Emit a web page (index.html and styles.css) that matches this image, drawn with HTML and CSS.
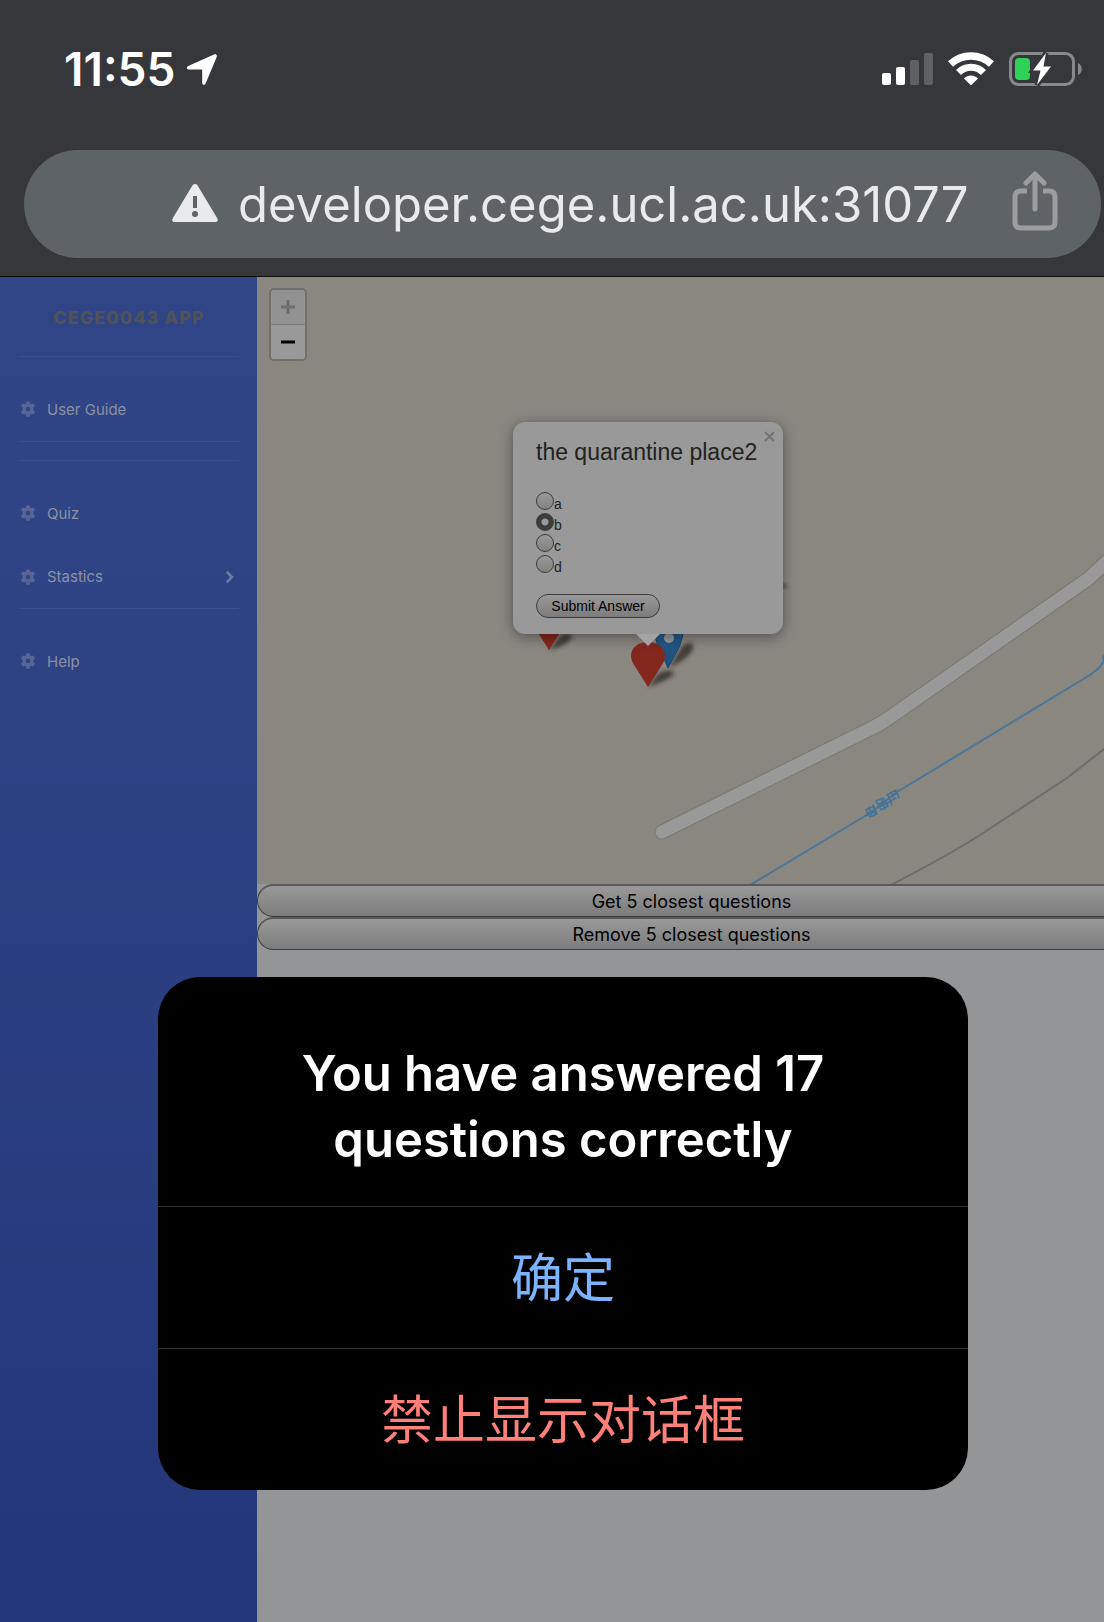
FILE: index.html
```html
<!DOCTYPE html>
<html lang="en">
<head>
<meta charset="utf-8">
<meta name="viewport" content="width=device-width, initial-scale=1">
<title>CEGE0043 APP</title>
<link rel="stylesheet" href="styles.css">
</head>
<body>
<svg class="defs" aria-hidden="true">
  <symbol id="gear" viewBox="0 0 16 16"><path fill-rule="evenodd" d="M6.500.3h3l.5 2.100 1.300.7 2.100-.7 1.700 2.900-1.700 1.400v2.600l1.700 1.400-1.700 2.900-2.100-.7-1.300.7-.5 2.100h-3L6 13.600l-1.300-.7-2.100.7L.9 10.700l1.700-1.400V6.700L.9 5.300l1.700-2.900 2.100.7L6 2.400zM8 5.700a2.300 2.300 0 1 0 0 4.600 2.300 2.300 0 0 0 0-4.600z"/></symbol>
</svg>

<header class="browser">
  <div class="status">
    <div class="status-left">
      <span class="clock">11:55</span>
      <svg class="locate" viewBox="0 0 30 31" aria-hidden="true"><path d="M27 .6c2-.8 3.400.6 2.600 2.600L18.600 29.500c-.7 1.800-3.400 1.600-3.400-.6V16.500c0-.7-.4-1-1-1H2c-2.400 0-2.700-2.600-.8-3.400z" fill="#fff"/></svg>
    </div>
    <div class="status-right">
      <svg class="signal" viewBox="0 0 51 34" aria-hidden="true"><g fill="#fff"><rect x="0" y="21" width="9" height="12" rx="2"/><rect x="14" y="15" width="9" height="18" rx="2"/></g><g fill="#5f6064"><rect x="28" y="8" width="9" height="25" rx="2"/><rect x="42" y="1" width="9" height="32" rx="2"/></g></svg>
      <svg class="wifi" viewBox="0 0 46 34" aria-hidden="true"><g fill="none" stroke="#fff"><path d="M2.500 12C14 1.200 32 1.200 43.500 12" stroke-width="7.500"/><path d="M10.500 20.500C17.500 13.500 28.500 13.500 35.500 20.500" stroke-width="7"/></g><path d="M16 26.500c4-4 10-4 14 0l-6.300 6.200c-.4.4-1 .4-1.400 0z" fill="#fff"/></svg>
      <svg class="battery" viewBox="0 0 74 34" aria-hidden="true"><rect x="1.500" y="1.500" width="63" height="31" rx="8" fill="none" stroke="#88898b" stroke-width="3"/><path d="M69 11c5 2 5 10 0 12z" fill="#88898b"/><rect x="6" y="6" width="15" height="22" rx="4" fill="#30d158"/><path d="M37 1 24 18.500h7.500L28 33l14-18.500h-7.500z" fill="#fff" stroke="#36373b" stroke-width="5" paint-order="stroke"/></svg>
    </div>
  </div>
  <div class="address">
    <svg class="warn" viewBox="0 0 46 38" aria-hidden="true"><path fill-rule="evenodd" d="M20.400 1.500c1.200-2 4-2 5.200 0l19.800 33c1 1.800 0 3.500-2 3.500H2.600c-2 0-3-1.700-2-3.500zM21 12v12h4V12zm2 15a3 3 0 1 0 0 6 3 3 0 0 0 0-6z" fill="#e8eaed"/></svg>
    <span class="url">developer.cege.ucl.ac.uk:31077</span>
    <button class="share" type="button" aria-label="Share"><svg viewBox="0 0 46 60" aria-hidden="true"><g fill="none" stroke="#9b9da1" stroke-width="5" stroke-linecap="round" stroke-linejoin="round"><path d="M23 38V3M14 12l9-9 9 9"/><path stroke-linecap="butt" d="M15 20H9q-6 0-6 6v25q0 6 6 6h28q6 0 6-6V26q0-6-6-6h-6"/></g></svg></button>
  </div>
</header>

<div class="app">
  <nav class="sidebar">
    <h1 class="brand">CEGE0043 APP</h1>
    <a class="item first" href="#guide"><svg class="gear"><use href="#gear"/></svg>User Guide</a>
    <div class="rule"></div>
    <a class="item second" href="#quiz"><svg class="gear"><use href="#gear"/></svg>Quiz</a>
    <a class="item third" href="#stats"><svg class="gear"><use href="#gear"/></svg>Stastics<svg class="chevron" viewBox="0 0 8 12" aria-hidden="true"><path d="M1.500 1.500 6 6l-4.500 4.500" fill="none" stroke="#6f7ba3" stroke-width="2.500" stroke-linecap="round"/></svg></a>
    <a class="item last" href="#help"><svg class="gear"><use href="#gear"/></svg>Help</a>
  </nav>

  <main class="content">
    <section class="map">
      <svg class="tiles" viewBox="257 277 847 607" preserveAspectRatio="xMidYMid slice" aria-hidden="true">
        <defs>
          <filter id="soft" x="-30%" y="-30%" width="160%" height="160%"><feGaussianBlur stdDeviation="2"/></filter>
          <linearGradient id="blue" x1="0" y1="0" x2="0" y2="1"><stop offset="0" stop-color="#28608f"/><stop offset="1" stop-color="#1d4c7c"/></linearGradient>
        </defs>
        <g fill="none" stroke-linejoin="round" stroke-linecap="round">
          <path id="road" d="M662 832 872 728Q880 724 886 720L1088 579 1114 555" stroke="#7c7771" stroke-width="15"/>
          <path d="M662 832 872 728Q880 724 886 720L1088 579 1114 555" stroke="#999" stroke-width="13"/>
          <path d="M745 888 870 813 897 792 1090 675 1099 668 1104 661" stroke="#4b7697" stroke-width="2"/>
          <circle cx="1107" cy="658" r="4" stroke="#4b7697" stroke-width="2"/>
          <path d="M885 888Q940 860 977 837L1067 778 1108 746" stroke="#706c69" stroke-width="2"/>
          <g stroke="#447497" stroke-width="1.500"><path d="m866 810 8-4 3 8-7 3zM867 813l9-3M869 807l3 9M873 805l2 9M866 816l10-5M876 801l7-3 5 8-7 4zM878 804l6-2M879 807l7-3M881 799l4 10M877 808l11-5M887 795l9-5 3 8M889 798l7-4M890 801l6-3M888 795l4 10M891 793l4 6M887 803l5-2"/></g>
        </g>
        <path d="M549 650 562 634H572Q574 643 549 650zM648 687 658 674Q668 668 673 672T648 687zM669 668 683 645Q694 640 693 648T669 668z" fill="#2d2926" opacity=".8" filter="url(#soft)"/>
        <ellipse cx="782" cy="586" rx="5" ry="2" fill="#45413e" filter="url(#soft)"/>
        <path d="M655 632Q655 642 661 652L668 668 675 655Q683 642 683 630L669 620z" fill="url(#blue)" stroke="#1c466b"/>
        <circle cx="669" cy="638" r="5" fill="#999"/>
        <path d="M549 650 535 628H563zM648 687 636 668Q631 661 631 656C631 647 639 642 648 642S665 647 665 656Q665 661 660 668z" fill="#84271e"/>
      </svg>
      <div class="zoom">
        <button type="button" class="zoom-in" disabled aria-label="Zoom in"><svg viewBox="0 0 14 14"><path d="M0 7h14M7 0v14" stroke="#6c6c6c" stroke-width="3"/></svg></button>
        <button type="button" aria-label="Zoom out"><svg viewBox="0 0 14 14"><path d="M0 7h14" stroke="#000" stroke-width="3"/></svg></button>
      </div>
      <form class="popup">
        <button class="close" type="button" aria-label="Close"><svg viewBox="0 0 11 11"><path d="m1 1 9 9M10 1l-9 9" stroke="#757575" stroke-width="2"/></svg></button>
        <h2>the quarantine place2</h2>
        <div class="choices">
          <label><input type="radio" name="answer"><span>a</span></label>
          <label><input type="radio" name="answer" checked><span>b</span></label>
          <label><input type="radio" name="answer"><span>c</span></label>
          <label><input type="radio" name="answer"><span>d</span></label>
        </div>
        <button class="submit" type="button">Submit Answer</button>
      </form>
    </section>
    <button class="wide" type="button">Get 5 closest questions</button>
    <button class="wide" type="button">Remove 5 closest questions</button>
  </main>

  <section class="alert" role="alertdialog" aria-labelledby="alert-title">
    <h2 id="alert-title">You have answered 17 questions correctly</h2>
    <button type="button" lang="zh-CN">确定</button>
    <button type="button" class="danger" lang="zh-CN">禁止显示对话框</button>
  </section>
</div>
</body>
</html>
```
FILE: styles.css
```css
* { box-sizing: border-box; }
body {
  margin: 0;
  min-height: 100vh;
  display: flex;
  flex-direction: column;
  font-family: Inter, "Liberation Sans", sans-serif;
  background: #949597;
}
h1, h2 { margin: 0; }
button { margin: 0; padding: 0; border: 0; font: inherit; color: inherit; }
svg { display: block; flex: none; }
.defs { position: absolute; width: 0; height: 0; }

/* Browser bar */
.browser {
  background: #36373b;
  border-bottom: 1px solid #0c0c0d;
  padding: 38px 3px 18px 24px;
}
.status {
  display: flex;
  justify-content: space-between;
  height: 62px;
  margin-bottom: 50px;
  padding: 0 18px 0 40px;
}
.status-left, .status-right { display: flex; align-items: center; }
.status-left { gap: 12px; color: #fff; }
.clock { font-size: 46px; font-weight: 600; line-height: 64px; }
.locate { width: 30px; height: 31px; }
.status-right { gap: 15px; }
.signal { width: 51px; height: 34px; }
.wifi { width: 46px; height: 34px; }
.battery { width: 74px; height: 34px; }
.address {
  display: flex;
  align-items: center;
  height: 108px;
  padding: 0 43px 0 148px;
  border-radius: 54px;
  background: #5e6367;
  color: #e8eaed;
}
.warn { width: 46px; height: 38px; margin-bottom: 2px; }
.url { flex: 1; margin-left: 20px; padding-top: 2px; font-size: 49px; line-height: 60px; white-space: nowrap; }
.share { width: 46px; height: 60px; margin-bottom: 6px; background: none; }
.share svg { width: 100%; }

/* Page */
.app { flex: 1; display: flex; position: relative; overflow: hidden; }
.sidebar {
  flex: none;
  width: 257px;
  padding: 0 18px 0 19px;
  background: linear-gradient(#2f4585 0%, #2d4384 30%, #24367a 100%);
}
.brand {
  height: 80px;
  border-bottom: 1px solid #3d508b;
  text-align: center;
  font-size: 18px;
  font-weight: 800;
  line-height: 81px;
  letter-spacing: 1px;
  color: #505259;
}
.item {
  display: flex;
  align-items: center;
  height: 64px;
  padding-left: 1px;
  font-size: 15px;
  color: #8b91a5;
  text-decoration: none;
}
.gear { width: 16px; height: 16px; margin-right: 11px; fill: #566595; }
.chevron { width: 8px; height: 12px; margin: 0 5px 0 auto; }
.first { margin-top: 20px; }
.rule { height: 20px; border: solid #3d508b; border-width: 1px 0; }
.second { margin-top: 20px; }
.third { border-bottom: 1px solid #3d508b; }
.last { margin-top: 20px; }

.content { flex: 1; min-width: 0; }
.map { position: relative; height: 607px; overflow: hidden; background: #8a8680; }
.tiles { width: 100%; height: 100%; }
.zoom {
  position: absolute;
  left: 12px;
  top: 11px;
  width: 38px;
  border: 2px solid #736e69;
  border-radius: 5px;
  overflow: hidden;
}
.zoom button { display: grid; place-items: center; width: 100%; height: 34px; background: #999; }
.zoom .zoom-in { height: 35px; background: #929292; border-bottom: 1px solid #7a7a7a; }
.zoom svg { width: 14px; height: 14px; }

.popup {
  position: absolute;
  left: 256px;
  top: 145px;
  width: 270px;
  padding: 17px 23px 16px;
  border-radius: 12px;
  background: #999;
  box-shadow: 0 3px 14px rgba(0, 0, 0, .4);
  color: #222;
  font-family: "Liberation Sans", Arial, sans-serif;
  font-size: 14px;
}
.popup::after {
  content: "";
  position: absolute;
  left: 123px;
  top: 100%;
  border: 12px solid transparent;
  border-top-color: #a3a3a3;
  border-bottom: 0;
}
.popup h2 { font-size: 23px; font-weight: 400; line-height: 26px; white-space: nowrap; }
.close { position: absolute; right: 8px; top: 9px; background: none; }
.close svg { width: 11px; height: 11px; }
.choices { margin: 27px 0 21px; }
.choices label { display: flex; align-items: flex-start; height: 21px; line-height: 24px; }
.choices label:last-child { height: 18px; }
.choices input {
  appearance: none;
  width: 18px;
  height: 18px;
  margin: 0;
  border: 1px solid #3c3c3c;
  border-radius: 50%;
  background: linear-gradient(#999, #828282);
}
.choices input:checked { background: radial-gradient(circle, #999 0 3px, #3c3c3c 4px); }
.submit {
  display: block;
  width: 124px;
  height: 24px;
  border: 1px solid #3c3c3c;
  border-radius: 12px;
  background: linear-gradient(#999, #7c7c7c);
  color: #000;
}
.wide {
  display: block;
  width: calc(100% + 22px);
  height: 33px;
  padding-top: 1px;
  border: 1px solid #3c3c3c;
  border-top: 2px solid #5a5a5a;
  border-radius: 17px;
  background: linear-gradient(#999, #7c7c7c);
  font-size: 18px;
  color: #000;
}

/* Alert */
.alert {
  position: absolute;
  left: 158px;
  right: 136px;
  top: 700px;
  border-radius: 42px;
  background: #000;
  overflow: hidden;
}
.alert h2 {
  padding: 64px 120px 33px;
  text-align: center;
  font-size: 49px;
  font-weight: 600;
  line-height: 66px;
  color: #fff;
}
.alert button {
  display: block;
  width: 100%;
  height: 142px;
  padding-bottom: 6px;
  border-top: 1px solid #2e2e2e;
  background: none;
  font-family: "Noto Sans CJK SC", sans-serif;
  font-size: 52px;
  color: #7ab4ff;
}
.alert .danger { color: #ff7f79; }
```
